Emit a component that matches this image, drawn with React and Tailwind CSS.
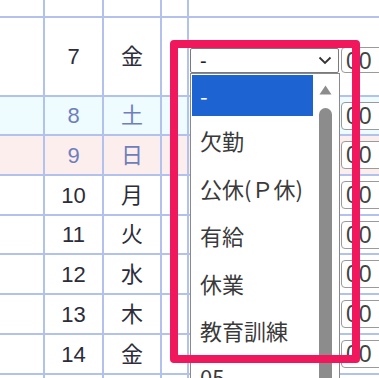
import React from "react";

const rows = [
  { h: "h-[79px]", n: "7", d: "金", bg: "bg-white", tone: "text-[#2c2c3a]", select: true, inputCls: "mt-[29px] h-[26px]" },
  { h: "h-[39px]", n: "8", d: "土", bg: "bg-[#eefbff]", tone: "text-[#6e7fbc]", inputCls: "mt-[5px] h-[28px]" },
  { h: "h-[40px]", n: "9", d: "日", bg: "bg-[#fdeeee]", tone: "text-[#6e7fbc]", inputCls: "mt-[5px] h-[28px]" },
  { h: "h-[40px]", n: "10", d: "月", bg: "bg-white", tone: "text-[#2c2c3a]", inputCls: "mt-[5px] h-[28px]" },
  { h: "h-[39px]", n: "11", d: "火", bg: "bg-white", tone: "text-[#2c2c3a]", inputCls: "mt-[5px] h-[28px]" },
  { h: "h-[40px]", n: "12", d: "水", bg: "bg-white", tone: "text-[#2c2c3a]", inputCls: "mt-[5px] h-[28px]" },
  { h: "h-[40px]", n: "13", d: "木", bg: "bg-white", tone: "text-[#2c2c3a]", inputCls: "mt-[5px] h-[28px]" },
  { h: "h-[40px]", n: "14", d: "金", bg: "bg-white", tone: "text-[#2c2c3a]", inputCls: "mt-[5px] h-[28px]" },
];

const items = [
  { t: "欠勤", h: "h-[48px]" },
  { t: "公休(Ｐ休)", h: "h-[47px]" },
  { t: "有給", h: "h-[48px]" },
  { t: "休業", h: "h-[47px]" },
  { t: "教育訓練", h: "h-[48px]" },
  { t: "05", h: "h-[44px]" },
];

const font = "font-['Liberation_Sans','Noto_Sans_CJK_JP',sans-serif]";
const line = "border-[#b3c2ec]";

function Input({ cls }) {
  return (
    <div className={`${cls} ml-[2px] w-[60px] shrink-0 rounded-[4px] border border-[#9a9a9a] bg-white pl-[4px] text-[23px] leading-[26px] text-[#444]`}>
      00
    </div>
  );
}

export default function App() {
  return (
    <div className={`relative h-[378px] w-[379px] overflow-hidden bg-white ${font}`}>
      {/* grid */}
      <div className="flex flex-col">
        <div className={`flex h-[18px] border-b-2 ${line}`}>
          <div className={`w-[45px] shrink-0 border-r-2 ${line}`} />
          <div className={`w-[59px] shrink-0 border-r-2 ${line}`} />
          <div className={`w-[58px] shrink-0 border-r-2 ${line}`} />
          <div className={`w-[27px] shrink-0 border-r-2 ${line}`} />
          <div className="flex-1" />
        </div>
        {rows.map((r, i) => (
          <div key={i} className={`flex shrink-0 ${r.h} ${r.bg} border-b-2 ${line}`}>
            <div className={`w-[45px] shrink-0 border-r-2 ${line}`} />
            <div className={`flex w-[59px] shrink-0 items-center justify-center border-r-2 ${line} text-[22px] ${r.tone}`}>
              {r.n}
            </div>
            <div className={`flex w-[58px] shrink-0 items-center justify-center border-r-2 ${line} text-[22px] ${r.tone}`}>
              {r.d}
            </div>
            <div className={`w-[27px] shrink-0 border-r-2 ${line}`} />
            <div className="flex flex-1 items-start">
              {r.select ? (
                <div className="ml-[1px] mt-[30px] flex h-[25px] w-[149px] shrink-0 items-center justify-between rounded-[2px] border border-[#7a7a7a] bg-white pl-[9px] pr-[6px] text-[20px] text-[#222]">
                  <span className="leading-none">-</span>
                  <svg width="14" height="9" viewBox="0 0 14 9">
                    <path d="M1.5 1.5 L7 7 L12.5 1.5" fill="none" stroke="#333" strokeWidth="1.8" />
                  </svg>
                </div>
              ) : (
                <div className="w-[150px] shrink-0" />
              )}
              <Input cls={r.inputCls} />
            </div>
          </div>
        ))}
        <div className="flex h-[10px] shrink-0 bg-white">
          <div className={`w-[45px] shrink-0 border-r-2 ${line}`} />
          <div className={`w-[59px] shrink-0 border-r-2 ${line}`} />
          <div className={`w-[58px] shrink-0 border-r-2 ${line}`} />
          <div className={`w-[27px] shrink-0 border-r-2 ${line}`} />
          <div className="flex-1" />
        </div>
      </div>

      {/* open dropdown list */}
      <div className="absolute left-[190px] top-[73px] z-10 flex h-[320px] w-[150px] border border-[#8a8a8a] bg-white font-['Noto_Sans_CJK_JP',sans-serif]">
        <div className="flex flex-1 flex-col pl-[1px] pt-[1px] text-[22px] text-[#3a3a3a]">
          <div className="flex h-[41px] shrink-0 items-center bg-[#1d63d2] pl-[8px] text-white">-</div>
          {items.map((it) => (
            <div key={it.t} className={`flex ${it.h} shrink-0 items-center whitespace-nowrap pl-[8px] leading-none`}>
              {it.t}
            </div>
          ))}
        </div>
        <div className="relative w-[26px] shrink-0 bg-white">
          <svg className="absolute left-[6px] top-[11px]" width="13" height="10" viewBox="0 0 13 10">
            <path d="M6.5 0.5 L12.5 9.5 L0.5 9.5 Z" fill="#8c8c8c" />
          </svg>
          <div className="absolute left-[6px] top-[34px] h-[320px] w-[13px] rounded-full bg-[#8c8c8c]" />
        </div>
      </div>

      {/* red highlight frame */}
      <div className="absolute left-[170px] top-[40px] z-20 h-[323px] w-[190px] rounded-[4px] border-[8px] border-[#f0175c]" />
    </div>
  );
}
